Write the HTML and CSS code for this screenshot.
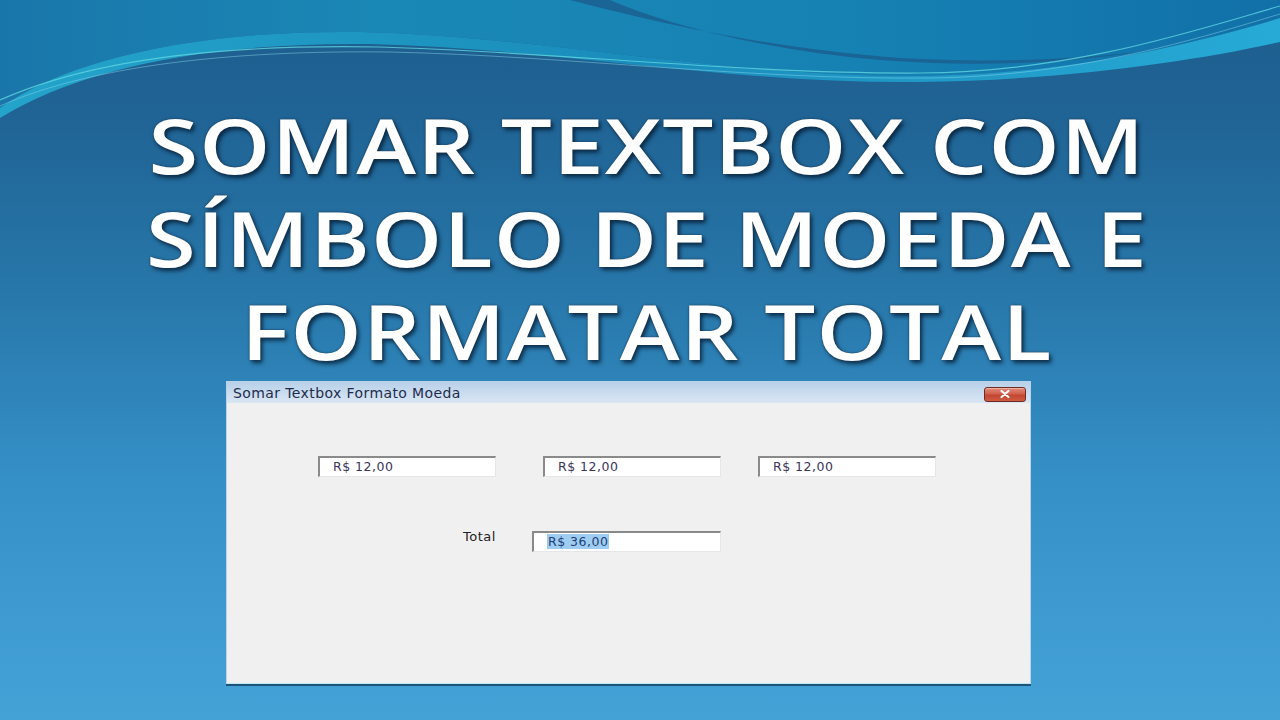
FILE: index.html
```html
<!DOCTYPE html>
<html lang="pt">
<head>
<meta charset="utf-8">
<title>Somar Textbox com Símbolo de Moeda</title>
<link rel="stylesheet" href="styles.css">
</head>
<body>
<div class="slide">
  <svg class="waves" width="1280" height="130" viewBox="0 0 1280 130" aria-hidden="true">
    <defs>
      <linearGradient id="topTeal" x1="0" y1="0" x2="1" y2="0">
        <stop offset="0" stop-color="#1a76aa"/>
        <stop offset="0.3" stop-color="#1a88b6"/>
        <stop offset="0.65" stop-color="#1682b4"/>
        <stop offset="1" stop-color="#1170a8"/>
      </linearGradient>
      <linearGradient id="cyanEdge" x1="0" y1="0" x2="1" y2="0">
        <stop offset="0" stop-color="#23a4cb"/>
        <stop offset="0.5" stop-color="#1a8cbb"/>
        <stop offset="1" stop-color="#27aad6"/>
      </linearGradient>
    </defs>
    <path d="M0,0 L1280,0 L1280,18 C1190,45 1060,76 910,76 C720,76 540,36 360,32 C200,30 70,58 0,108 Z" fill="url(#topTeal)"/>
    <path d="M0,108 C70,58 200,30 360,32 C540,36 720,76 910,76 C1060,76 1190,45 1280,18 L1280,42 C1200,60 1070,80 920,82 C730,84 550,48 370,44 C210,42 80,68 0,118 Z" fill="url(#cyanEdge)"/>
    <path d="M570,0 C640,18 760,48 900,58 C990,63 1060,60 1140,52 C1040,66 960,66 880,60 C760,50 660,22 610,0 Z" fill="#1b5f8f" opacity="0.85"/>
    <path d="M0,100 C90,60 220,44 380,47 C560,52 740,74 920,73 C1070,72 1190,32 1280,6" fill="none" stroke="#5fd6e0" stroke-width="1.2" opacity="0.8"/>
    <path d="M0,106 C90,66 230,50 390,52 C570,56 750,80 930,78 C1080,76 1200,38 1280,14" fill="none" stroke="#8fdcf0" stroke-width="0.9" opacity="0.5"/>
  </svg>

  <h1 class="headline">
    <span class="line">SOMAR TEXTBOX COM</span>
    <span class="line">SÍMBOLO DE MOEDA E</span>
    <span class="line">FORMATAR TOTAL</span>
  </h1>

  <div class="window">
    <div class="titlebar">
      <span class="wintitle">Somar Textbox Formato Moeda</span>
      <span class="closebtn">
        <svg width="14" height="10" viewBox="0 0 14 10" aria-hidden="true">
          <path d="M3.5,2 L10.5,8 M10.5,2 L3.5,8" stroke="#ffffff" stroke-width="2.2" stroke-linecap="round"/>
        </svg>
      </span>
    </div>
    <div class="client">
      <div class="row">
        <div class="textbox tb1">R$ 12,00</div>
        <div class="textbox tb2">R$ 12,00</div>
        <div class="textbox tb3">R$ 12,00</div>
      </div>
      <div class="row total-row">
        <span class="label">Total</span>
        <div class="textbox total"><span class="sel">R$ 36,00</span></div>
      </div>
    </div>
  </div>
</div>
</body>
</html>
```

FILE: styles.css
```css
html, body {
  margin: 0;
  padding: 0;
}

body {
  width: 1280px;
  height: 720px;
  overflow: hidden;
}

.slide {
  position: relative;
  width: 1280px;
  height: 720px;
  background: linear-gradient(to bottom, #1d5d8d 0px, #206596 130px, #2878ab 300px, #3590c7 480px, #45a2d7 720px);
  display: flex;
  flex-direction: column;
  overflow: hidden;
}

.waves {
  position: absolute;
  left: 0;
  top: 0;
}

.headline {
  position: relative;
  margin: 0;
  padding-top: 98px;
  display: flex;
  flex-direction: column;
  align-items: center;
  font-family: "Open Sans", "Noto Sans", sans-serif;
  font-weight: 600;
  font-size: 76px;
  line-height: 93px;
  color: #ffffff;
  letter-spacing: 1px;
  text-shadow: 0 0 2px #1d3550, 2px 3px 4px rgba(0, 20, 40, 0.75);
  padding-left: 14px;
}

.line {
  display: block;
  white-space: nowrap;
  transform: scaleX(1.19);
}

.window {
  position: relative;
  margin-top: 4px;
  margin-left: 226px;
  width: 805px;
  height: 303px;
  box-sizing: border-box;
  border: 1px solid #b9d3e8;
  border-bottom: 1px solid #bfe4f4;
  box-shadow: 0 2px 0 #1d5578;
  background: #f0f0f0;
  display: flex;
  flex-direction: column;
  font-family: "DejaVu Sans", "Open Sans", sans-serif;
}

.titlebar {
  height: 21px;
  flex: none;
  display: flex;
  align-items: center;
  justify-content: space-between;
  padding: 0 4px 0 6px;
  background: linear-gradient(to bottom, #b8d0e8 0%, #c8dbee 45%, #d9e6f3 100%);
}

.wintitle {
  font-size: 14px;
  color: #1f2c4d;
  letter-spacing: 0.4px;
  padding-top: 1px;
}

.closebtn {
  width: 42px;
  height: 15px;
  margin-top: 3px;
  box-sizing: border-box;
  border: 1px solid #6e2b22;
  border-radius: 3px;
  background: linear-gradient(to bottom, #e48a78 0%, #d0604b 45%, #c24632 55%, #cf5b40 100%);
  display: flex;
  align-items: center;
  justify-content: center;
  box-shadow: inset 0 1px 0 rgba(255, 255, 255, 0.35);
}

.client {
  flex: 1;
  background: #f0f0f0;
  padding-top: 53px;
  display: flex;
  flex-direction: column;
}

.row {
  display: flex;
  align-items: flex-start;
}

.textbox {
  box-sizing: border-box;
  height: 21px;
  width: 178px;
  background: #ffffff;
  border-top: 2px solid #8a8a8a;
  border-left: 2px solid #8a8a8a;
  border-right: 1px solid #e6e6e6;
  border-bottom: 1px solid #e6e6e6;
  font-size: 12.5px;
  letter-spacing: 0.5px;
  line-height: 17px;
  color: #3b3358;
  padding-left: 13px;
}

.tb1 { margin-left: 91px; }
.tb2 { margin-left: 47px; }
.tb3 { margin-left: 37px; }

.total-row {
  margin-top: 54px;
}

.label {
  margin-left: 236px;
  margin-top: -2px;
  font-size: 13px;
  letter-spacing: 0.5px;
  color: #222222;
  width: 69px;
}

.textbox.total {
  width: 189px;
  padding-left: 13px;
}

.sel {
  background: #9fcdf2;
  color: #1f3f78;
  padding: 0 1px;
}
```
